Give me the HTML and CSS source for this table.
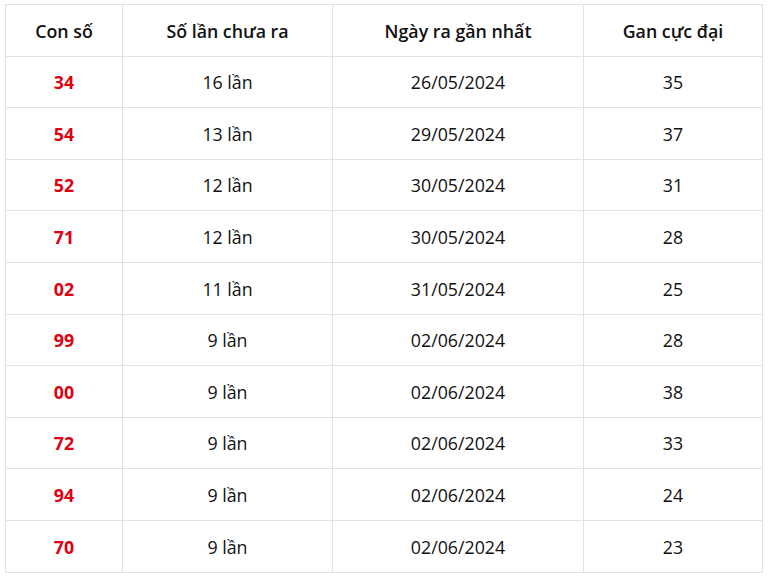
FILE: index.html
```html
<!DOCTYPE html>
<html lang="vi">
<head>
<meta charset="utf-8">
<link rel="stylesheet" href="styles.css">
</head>
<body>
<table class="gan-table">
  <colgroup>
    <col class="c1"><col class="c2"><col class="c3"><col class="c4">
  </colgroup>
  <thead>
    <tr><th>Con số</th><th>Số lần chưa ra</th><th>Ngày ra gần nhất</th><th>Gan cực đại</th></tr>
  </thead>
  <tbody>
    <tr><td class="num">34</td><td>16 lần</td><td>26/05/2024</td><td>35</td></tr>
    <tr><td class="num">54</td><td>13 lần</td><td>29/05/2024</td><td>37</td></tr>
    <tr><td class="num">52</td><td>12 lần</td><td>30/05/2024</td><td>31</td></tr>
    <tr><td class="num">71</td><td>12 lần</td><td>30/05/2024</td><td>28</td></tr>
    <tr><td class="num">02</td><td>11 lần</td><td>31/05/2024</td><td>25</td></tr>
    <tr><td class="num">99</td><td>9 lần</td><td>02/06/2024</td><td>28</td></tr>
    <tr><td class="num">00</td><td>9 lần</td><td>02/06/2024</td><td>38</td></tr>
    <tr><td class="num">72</td><td>9 lần</td><td>02/06/2024</td><td>33</td></tr>
    <tr><td class="num">94</td><td>9 lần</td><td>02/06/2024</td><td>24</td></tr>
    <tr><td class="num">70</td><td>9 lần</td><td>02/06/2024</td><td>23</td></tr>
  </tbody>
</table>
</body>
</html>
```
FILE: styles.css
```css
html, body {
  margin: 0;
  background: #fff;
}
body {
  padding: 4px 5px;
  font-family: "Open Sans", "Noto Sans", sans-serif;
  color: #111;
}
.gan-table {
  border-collapse: collapse;
  table-layout: fixed;
  width: 757px;
  font-size: 17.8px;
}
.c1 { width: 117px; }
.c2 { width: 210px; }
.c3 { width: 251px; }
.c4 { width: 179px; }
.gan-table th,
.gan-table td {
  border: 1px solid #dee2e6;
  text-align: center;
  vertical-align: middle;
  height: 51.6px;
  padding: 2px 8px 0;
  box-sizing: border-box;
  line-height: 1.2;
}
.gan-table th {
  font-weight: 600;
  color: #111;
}
.gan-table td {
  font-weight: 400;
}
.gan-table td.num {
  color: #e0000f;
  font-weight: 700;
}
```
